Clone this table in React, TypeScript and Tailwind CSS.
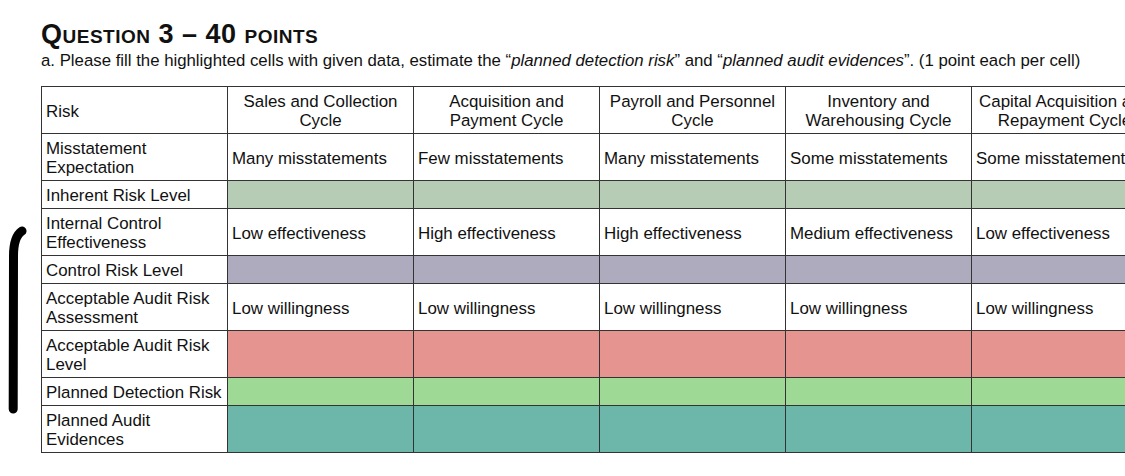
import React from "react";

const cols: [string, string][] = [
  ["Sales and Collection", "Cycle"],
  ["Acquisition and", "Payment Cycle"],
  ["Payroll and Personnel", "Cycle"],
  ["Inventory and", "Warehousing Cycle"],
  ["Capital Acquisition and", "Repayment Cycle"],
];

type Row = { label: string; values?: string[]; color?: string };

const rows: Row[] = [
  {
    label: "Misstatement Expectation",
    values: ["Many misstatements", "Few misstatements", "Many misstatements", "Some misstatements", "Some misstatements"],
  },
  { label: "Inherent Risk Level", color: "bg-[#b7ccb4]" },
  {
    label: "Internal Control Effectiveness",
    values: ["Low effectiveness", "High effectiveness", "High effectiveness", "Medium effectiveness", "Low effectiveness"],
  },
  { label: "Control Risk Level", color: "bg-[#adabbd]" },
  {
    label: "Acceptable Audit Risk Assessment",
    values: ["Low willingness", "Low willingness", "Low willingness", "Low willingness", "Low willingness"],
  },
  { label: "Acceptable Audit Risk Level", color: "bg-[#e59490]" },
  { label: "Planned Detection Risk", color: "bg-[#9ed995]" },
  { label: "Planned Audit Evidences", color: "bg-[#6db6aa]" },
];

export default function App() {
  return (
    <div
      className="relative w-[1125px] h-[476px] overflow-hidden bg-white text-[#111] pl-[41px] pt-[20px]"
      style={{ fontFamily: '"Liberation Sans", Arial, sans-serif' }}
    >
      <svg className="absolute left-0 top-0" width="40" height="476" viewBox="0 0 40 476">
        <path
          d="M 22 231 C 16 235 13.5 243 13.5 256 L 13.2 409"
          fill="none"
          stroke="#000"
          strokeWidth="9"
          strokeLinecap="round"
        />
      </svg>

      <div className="text-[27px] leading-[28px] tracking-[0.5px] font-bold whitespace-nowrap [font-variant:small-caps]">
        Question 3 – 40 points
      </div>
      <div className="mt-[3px] text-[16.8px] leading-[19px] whitespace-nowrap">
        a. Please fill the highlighted cells with given data, estimate the “<i>planned detection risk</i>” and “
        <i>planned audit evidences</i>”. (1 point each per cell)
      </div>

      <div className="mt-[16px] grid grid-cols-[repeat(6,186px)] grid-rows-[47px_47px_28px_47px_28px_47px_47px_28px_47px] w-max border-l border-t border-[#333] text-[16.9px] leading-[19px]">
        <div className="flex items-center pl-[4px] pt-[2px] border-r border-b border-[#333]">Risk</div>
        {cols.map(([a, b]) => (
          <div
            key={a}
            className="flex items-center justify-center text-center pt-[2px] border-r border-b border-[#333] whitespace-nowrap"
          >
            <span className="block">
              {a}
              <br />
              {b}
            </span>
          </div>
        ))}
        {rows.map((r) => (
          <React.Fragment key={r.label}>
            <div className="flex items-center pl-[4px] pr-[2px] pt-[2px] border-r border-b border-[#333] bg-white">
              <span>{r.label}</span>
            </div>
            {[0, 1, 2, 3, 4].map((i) => (
              <div
                key={i}
                className={
                  "flex items-center pl-[4px] pt-[2px] border-r border-b border-[#333] whitespace-nowrap " +
                  (r.color ? r.color : "bg-white")
                }
              >
                {r.values ? r.values[i] : ""}
              </div>
            ))}
          </React.Fragment>
        ))}
      </div>
    </div>
  );
}
